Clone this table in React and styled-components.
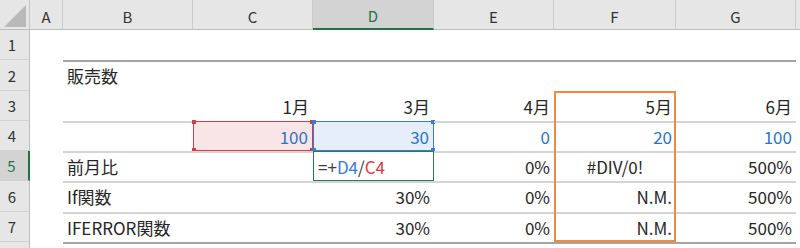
import React from "react";
import styled, { createGlobalStyle, css } from "styled-components";

const Global = createGlobalStyle`
  html, body { margin: 0; padding: 0; background: #fff; }
  body { width: 800px; height: 248px; overflow: hidden; }
`;

const INK = "#262626";
const BLUE = "#2f74c4";
const REF_BLUE = "#3b7ad2";
const REF_RED = "#d23c48";
const GREEN = "#217346";

const Sheet = styled.div`
  position: relative;
  display: grid;
  grid-template-columns: 30px 33px 130px 120px 121px 120px 122px 120px 1fr;
  grid-template-rows: 30px 30px 31px 30px 30px 30px 31px 30px 30px;
  width: 800px;
  height: 248px;
  overflow: hidden;
  font-family: "Noto Sans CJK JP", "Noto Sans", sans-serif;
  color: ${INK};
`;

const Corner = styled.div`
  position: relative;
  background: #e6e6e6;
  border-right: 1px solid #c4c4c4;
  border-bottom: 1px solid #bdbdbd;
  box-sizing: border-box;
  &::after {
    content: "";
    position: absolute;
    right: 3px;
    bottom: 2px;
    width: 22px;
    height: 22px;
    background: #b9b9b9;
    clip-path: polygon(100% 0, 100% 100%, 0 100%);
  }
`;

const ColHead = styled.div`
  display: flex;
  align-items: center;
  justify-content: center;
  padding-top: 3px;
  box-sizing: border-box;
  font-size: 15px;
  color: #333;
  background: #e6e6e6;
  border-right: 1px solid #cbcbcb;
  border-bottom: 1px solid #bdbdbd;
  ${(p) =>
    p.$active &&
    css`
      background: #d3d3d3;
      color: ${GREEN};
      border-bottom: 2px solid ${GREEN};
    `}
`;

const RowHead = styled.div`
  display: flex;
  align-items: center;
  justify-content: center;
  padding-right: 5px;
  box-sizing: border-box;
  font-size: 15px;
  color: #333;
  background: #e6e6e6;
  border-right: 1px solid #bdbdbd;
  border-bottom: 1px solid #d2d2d2;
  ${(p) =>
    p.$active &&
    css`
      background: #d3d3d3;
      color: ${GREEN};
      border-right: 2px solid ${GREEN};
    `}
`;

const tones = {
  red: css`
    background: #f9e5e6;
    border: 1px solid ${REF_RED};
  `,
  blue: css`
    background: #e6eef9;
    border: 1px solid ${REF_BLUE};
  `,
  green: css`
    border: 1px solid #2d7a4e;
  `,
};

const rules = {
  heavy: css`box-shadow: inset 0 2px 0 #a4a4a4;`,
  light: css`box-shadow: inset 0 2px 0 #d5d5d5;`,
};

const Cell = styled.div`
  position: relative;
  display: flex;
  align-items: center;
  justify-content: ${(p) =>
    p.$align === "right" ? "flex-end" : p.$align === "center" ? "center" : "flex-start"};
  padding: 0 4px;
  box-sizing: border-box;
  font-size: 17px;
  white-space: nowrap;
  color: ${(p) => p.$ink || INK};
  ${(p) => p.$rule && rules[p.$rule]}
  ${(p) => p.$tone && tones[p.$tone]}
`;

const Handle = styled.span`
  position: absolute;
  width: 4px;
  height: 4px;
  background: ${(p) => p.$color};
  ${(p) => (p.$at[0] === "t" ? "top: -2px;" : "bottom: -2px;")}
  ${(p) => (p.$at[1] === "l" ? "left: -2px;" : "right: -2px;")}
`;

/* highlight drawn over column F, rows 3–7; absolute so it takes no grid cells */
const Frame = styled.div`
  position: absolute;
  inset: 0;
  grid-column: 7 / 8;
  grid-row: 4 / 9;
  border: 2px solid #ef8a3f;
  box-sizing: border-box;
  pointer-events: none;
  z-index: 2;
`;

const Part = styled.span`
  color: ${(p) => p.$ink};
`;

const HANDLES = ["tl", "tr", "bl", "br"];

const COLUMNS = ["A", "B", "C", "D", "E", "F", "G", ""];

// one entry per worksheet row: cells keyed by column letter
const ROWS = [
  { n: 1, cells: {} },
  { n: 2, rule: "heavy", cells: { B: { text: "販売数" } } },
  {
    n: 3,
    cells: {
      C: { text: "1月", align: "right" },
      D: { text: "3月", align: "right" },
      E: { text: "4月", align: "right" },
      F: { text: "5月", align: "right" },
      G: { text: "6月", align: "right" },
    },
  },
  {
    n: 4,
    rule: "light",
    cells: {
      C: { text: "100", align: "right", ink: BLUE, tone: "red", handle: REF_RED },
      D: { text: "30", align: "right", ink: BLUE, tone: "blue", handle: REF_BLUE },
      E: { text: "0", align: "right", ink: BLUE },
      F: { text: "20", align: "right", ink: BLUE },
      G: { text: "100", align: "right", ink: BLUE },
    },
  },
  {
    n: 5,
    rule: "light",
    active: true,
    cells: {
      B: { text: "前月比" },
      D: {
        tone: "green",
        parts: [
          ["=+", "#404040"],
          ["D4", REF_BLUE],
          ["/", "#404040"],
          ["C4", REF_RED],
        ],
      },
      E: { text: "0%", align: "right" },
      F: { text: "#DIV/0!", align: "center" },
      G: { text: "500%", align: "right" },
    },
  },
  {
    n: 6,
    rule: "light",
    cells: {
      B: { text: "If関数" },
      D: { text: "30%", align: "right" },
      E: { text: "0%", align: "right" },
      F: { text: "N.M.", align: "right" },
      G: { text: "500%", align: "right" },
    },
  },
  {
    n: 7,
    rule: "light",
    cells: {
      B: { text: "IFERROR関数" },
      D: { text: "30%", align: "right" },
      E: { text: "0%", align: "right" },
      F: { text: "N.M.", align: "right" },
      G: { text: "500%", align: "right" },
    },
  },
  // only the top sliver of row 8 is in view, so its label is left blank
  { n: 8, label: "", rule: "heavy", cells: {} },
];

const inTable = (col) => col !== "" && "BCDEFG".includes(col);

export default function App() {
  return (
    <>
      <Global />
      <Sheet>
        <Corner />
        {COLUMNS.map((c, i) => (
          <ColHead key={`h${i}`} $active={c === "D"}>
            {c}
          </ColHead>
        ))}
        {ROWS.map((row) => (
          <React.Fragment key={row.n}>
            <RowHead $active={row.active}>{row.label ?? row.n}</RowHead>
            {COLUMNS.map((c, i) => {
              const cell = row.cells[c] || {};
              return (
                <Cell
                  key={`${row.n}-${i}`}
                  $align={cell.align}
                  $ink={cell.ink}
                  $tone={cell.tone}
                  $rule={inTable(c) && !cell.tone ? row.rule : undefined}
                >
                  {cell.parts
                    ? cell.parts.map(([t, ink], k) => (
                        <Part key={k} $ink={ink}>
                          {t}
                        </Part>
                      ))
                    : cell.text}
                  {cell.handle &&
                    HANDLES.map((h) => <Handle key={h} $at={h} $color={cell.handle} />)}
                </Cell>
              );
            })}
          </React.Fragment>
        ))}
        <Frame />
      </Sheet>
    </>
  );
}
